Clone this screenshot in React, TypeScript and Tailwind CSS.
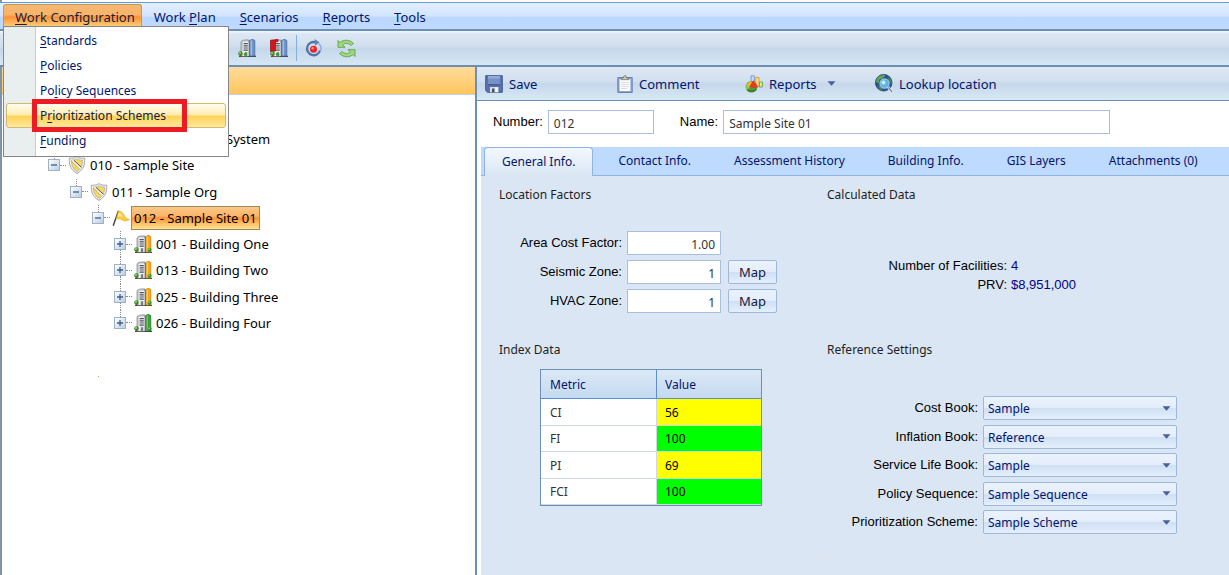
import React from "react";

const UI = "font-['Noto_Sans','Open_Sans',sans-serif]";
const LABEL = "font-['Liberation_Sans',Arial,sans-serif] text-[13px] text-black";

function Mnemonic({ text, at }: { text: string; at: number }) {
  return (
    <span>
      {text.slice(0, at)}
      <span className="underline underline-offset-2">{text[at]}</span>
      {text.slice(at + 1)}
    </span>
  );
}

/* ---------- icons ---------- */

function FacilityIcon({ tower, red = false }: { tower: "orange" | "green" | "blue"; red?: boolean }) {
  const fill = { orange: "#f5a81c", green: "#3f9e3f", blue: "#6f94c8" }[tower];
  const edge = { orange: "#c97b0a", green: "#23702a", blue: "#3d629b" }[tower];
  const light = { orange: "#ffd873", green: "#85cc7c", blue: "#b4cbea" }[tower];
  return (
    <svg width="18" height="18" viewBox="0 0 18 18" aria-hidden="true" className="shrink-0">
      <path d="M1 17.4h17" stroke="#45484c" strokeWidth="1.2" />
      <path d="M12 1.2l2.600-.9 2.200 1.200V17H12z" fill={fill} stroke={edge} strokeWidth=".7" />
      <path d="M13.200 1.600v15" stroke={light} strokeWidth="1.200" />
      <path d="M3 2.800l2-1.600 5.500-.4V17H3z" fill="#c3c6ca" stroke="#8d9197" strokeWidth=".8" />
      <path d="M4.800 2.600h6.200V17H4.800z" fill="#eff0f2" />
      <path d="M11.300 1.500V17" stroke="#6b6f76" strokeWidth="1.300" />
      <path d="M5.600 4.600h4.200M5.600 6.800h4.200M5.600 9h4.200M5.600 11.200h4.200" stroke="#4d5157" strokeWidth="1.200" />
      <path d="M6.800 13.200h2.400V17H6.800z" fill="#777c83" />
      {red && <path d="M.5 1.200l7.500-.8v2l-2.500.6v9L.5 12.500z" fill="#d2161c" stroke="#930c10" strokeWidth=".7" />}
      <circle cx="2.400" cy="14.500" r="2.200" fill="#359226" />
      <circle cx="2" cy="13.900" r="1" fill="#8dd666" />
      <path d="M2.400 15.800v1.600" stroke="#6b4a22" strokeWidth="1" />
      {tower === "blue" ? (
        <circle cx="7.500" cy="15.200" r="1.800" fill="#41a02d" />
      ) : (
        <>
          <circle cx="15.500" cy="14.800" r="2.100" fill="#359226" />
          <circle cx="15.100" cy="14.200" r=".9" fill="#8dd666" />
        </>
      )}
    </svg>
  );
}

function ShieldIcon() {
  return (
    <svg width="18" height="18" viewBox="0 0 18 18" aria-hidden="true" className="shrink-0">
      <path d="M9 .6c2 1.400 4.700 1.900 7.700 1.500.5 6.700-1.500 12-7.700 15.300C2.800 14.100.8 8.800 1.300 2.100 4.300 2.500 7 2 9 .6z" fill="#ececec" stroke="#a3a3a3" strokeWidth=".9" />
      <path d="M9 2.900c1.600 1 3.500 1.400 5.500 1.300.1 4.800-1.400 8.600-5.500 11.200C4.900 12.800 3.400 9 3.500 4.200 5.500 4.300 7.400 3.900 9 2.900z" fill="#fbd75a" stroke="#a9a9a9" strokeWidth=".7" />
      <path d="M3.600 4.300h2.200l7.500 7-1.500 2z" fill="#fdfdfd" />
      <path d="M5.800 4.200l7.600 7.200" stroke="#4f4a3c" strokeWidth="1" />
      <path d="M3.800 5.300l8 8" stroke="#8d8a80" strokeWidth=".6" />
    </svg>
  );
}

function FlagIcon() {
  return (
    <svg width="18" height="18" viewBox="0 0 18 18" aria-hidden="true" className="shrink-0">
      <path d="M6.500 1.800L1.200 16.800" stroke="#4a4a4a" strokeWidth="1.500" />
      <path d="M6.500 2.200c2.200-.8 3.800 1.400 5.400 3.800 1.400 2.200 3 4 5.600 4.600-2.800 1.900-5.200 1.600-7.200.4-2-1.100-3.700-1.600-6.100-.9z" fill="#fccb3c" stroke="#eaa70e" strokeWidth=".6" />
      <path d="M7 3.500c1.800.2 2.700 2.600 4.200 5-1.800-1-3.600-1.200-5.400-.8z" fill="#ffe896" />
    </svg>
  );
}

function RecordIcon() {
  return (
    <svg width="18" height="18" viewBox="0 0 18 18" aria-hidden="true">
      <path d="M10.500 3.300A6.600 6.600 0 1 0 15 11.500" fill="none" stroke="#5274ad" strokeWidth="2.300" />
      <path d="M9.500 0l5 3.200-4.500 3.600z" fill="#5f82ba" />
      <path d="M13.500 4.500c2.200 1.600 3 4 2.400 6.500" fill="none" stroke="#91a9cf" strokeWidth="1.500" />
      <circle cx="8.500" cy="10.200" r="3.500" fill="#e5262c" />
      <circle cx="7.700" cy="9.200" r="1.200" fill="#ff9490" />
    </svg>
  );
}

function RefreshIcon() {
  return (
    <svg width="19" height="19" viewBox="0 0 19 19" aria-hidden="true">
      <path d="M1 1.500l1.900 2C6.500.5 12.500.2 16.500 4.500l-2.600 2C11.500 3.800 8 3.800 5.600 6L8 8.300H1z" fill="#a4d67f" stroke="#5aa544" strokeWidth=".9" />
      <path d="M18 17.500l-1.900-2c-3.600 3-9.600 3.300-13.600-1l2.600-2c2.400 2.700 5.900 2.700 8.300.5L11 10.700h7z" fill="#a4d67f" stroke="#5aa544" strokeWidth=".9" />
    </svg>
  );
}

function SaveIcon() {
  return (
    <svg width="18" height="18" viewBox="0 0 18 18" aria-hidden="true">
      <path d="M.7.7h16.600v16.600H2.500L.7 15.500z" fill="#5673b0" stroke="#3f5b96" />
      <path d="M3 1h12v8.500H3z" fill="#7591c5" />
      <path d="M3 1h12v2.500H3z" fill="#93acd6" />
      <path d="M3 9.800h12" stroke="#35508c" />
      <path d="M5 12h8.500v5.300H5z" fill="#d9dce2" />
      <path d="M7 13.500h2.500v3.800H7z" fill="#48506a" />
      <path d="M10.500 12.500h2v4.500h-2z" fill="#fff" />
    </svg>
  );
}

function ClipboardIcon() {
  return (
    <svg width="16" height="18" viewBox="0 0 16 18" aria-hidden="true">
      <path d="M.8 2.500h14.400v15H.8z" fill="#8ba6d2" stroke="#6384bb" />
      <path d="M2.600 4h10.800v12H2.600z" fill="#fff" />
      <path d="M4 7.500h8M4 9.500h8M4 11.500h8M4 13.500h6" stroke="#ccd2dc" strokeWidth=".8" />
      <path d="M4 4.700V3h2.300C6.500 1.300 7 .6 8 .6s1.500.7 1.700 2.400H12v1.700z" fill="#c7c4bd" stroke="#77736a" strokeWidth=".8" />
    </svg>
  );
}

function ReportsIcon() {
  return (
    <svg width="18" height="18" viewBox="0 0 18 18" aria-hidden="true">
      <path d="M6 .8h3.400V9H6z" fill="#c8daf1" stroke="#6b90c5" strokeWidth=".8" />
      <path d="M10.800 2.500h3.200V11h-3.200z" fill="#ffe08a" stroke="#dc9418" strokeWidth=".8" />
      <path d="M14.400 7h3v5h-3z" fill="#d3ecae" stroke="#5a9b2d" strokeWidth=".8" />
      <circle cx="6.500" cy="11.800" r="5.800" fill="#4e9a36" />
      <path d="M6.500 11.500L1 9.600A5.900 5.900 0 0 0 1.600 15z" fill="#84c65e" />
      <path d="M4 12L8.300 5.200l5 7c-3 .9-6.300.9-9.300-.2z" fill="#e33b24" />
      <path d="M1.500 9.500L5.500 6l1.500 1.200L4 12z" fill="#f7b32c" />
      <path d="M2 15c2.500 1.600 6.500 1.500 9.500-.3" stroke="#2f6f24" fill="none" />
    </svg>
  );
}

function GlobeIcon() {
  return (
    <svg width="18" height="19" viewBox="0 0 18 19" aria-hidden="true">
      <circle cx="8.700" cy="8.700" r="8.300" fill="#2c529c" stroke="#27406f" strokeWidth=".8" />
      <path d="M2 4.500C4 1.500 7 .8 10.500 1.200L8 4 4.500 5.500 3.800 9 1 8.300z" fill="#5ba952" />
      <path d="M3 11l3.500 1.500 1 4.200C5 16.200 3.200 14 3 11zM13 2.500l3 3 .8 4-3-1z" fill="#3f8e48" />
      <circle cx="9.500" cy="9.500" r="4.600" fill="#56b7e8" stroke="#a9c6de" strokeWidth="1.100" />
      <circle cx="8.500" cy="8.500" r="2" fill="#c9f0ff" />
      <path d="M13 13l4 4.800" stroke="#eef2f6" strokeWidth="2.600" />
      <path d="M13.300 13.300l3.700 4.500" stroke="#5e789f" strokeWidth="1.200" />
    </svg>
  );
}

function Caret({ className = "" }: { className?: string }) {
  return (
    <svg width="9" height="5" viewBox="0 0 9 5" aria-hidden="true" className={className}>
      <path d="M.5.3h8L4.500 4.800z" fill="#4b5e9c" />
    </svg>
  );
}

/* ---------- menu ---------- */

const menuItems = [
  { text: "Standards", at: 0 },
  { text: "Policies", at: 0 },
  { text: "Policy Sequences", at: 2 },
  { text: "Prioritization Schemes", at: 1 },
  { text: "Funding", at: 0 },
];

function DropMenu() {
  return (
    <ul className="absolute left-[3px] top-[23px] z-10 w-[226px] border border-[#868686] bg-[linear-gradient(to_right,#e9eeee_31px,#c5cccc_31px,#c5cccc_32px,#ffffff_32px)] pb-[3px] pt-px text-[12px]">
      {menuItems.map((m) => (
        <li key={m.text} className="relative px-[2px]">
          <button
            type="button"
            className={
              m.text === "Prioritization Schemes"
                ? "flex h-[25px] w-full items-center rounded-[3px] border border-[#d2b970] bg-[linear-gradient(#fffdee,#ffedb0_48%,#ffd254_52%,#ffe9a0)] pl-[33px] text-left text-[#15203f]"
                : "flex h-[25px] w-full items-center border border-transparent pl-[33px] text-left text-[#00156e]"
            }
          >
            <Mnemonic text={m.text} at={m.at} />
          </button>
          {m.text === "Prioritization Schemes" && (
            <span className="pointer-events-none absolute -top-[4px] left-[28px] h-[33px] w-[155px] border-[5px] border-[#ed1c24]" />
          )}
        </li>
      ))}
    </ul>
  );
}

function MenuBar() {
  const rest = ["Work Plan", "Scenarios", "Reports", "Tools"];
  return (
    <nav className="relative flex h-[26px] items-stretch bg-[linear-gradient(#e3efff,#d2e4ff_50%,#bcd8ff_55%,#bfd9ff)] pl-[3px] text-[#00156e]">
      <button type="button" className="mt-px rounded-t-[3px] border border-b-0 border-[#c49b50] bg-[linear-gradient(#f3b877,#f9b467_40%,#fb9137_50%,#fdc066_80%,#ffdd8e)] pl-[11px] pr-[6px] text-[#15203f]">
        <Mnemonic text="Work Configuration" at={0} />
      </button>
      {rest.map((t) => (
        <button key={t} type="button" className="mt-px px-[12px]">
          <Mnemonic text={t} at={t === "Work Plan" ? 5 : 0} />
        </button>
      ))}
      <DropMenu />
    </nav>
  );
}

function ToolBar() {
  return (
    <div className="flex h-[38px] items-center gap-[14px] border-y-2 border-[#6b8fb5] bg-[linear-gradient(#f4f8fc,#dce7f3_8%,#d0deee_45%,#c5d7ea_52%,#d6e6f4)] pl-[238px]">
      <button type="button" aria-label="Facilities"><FacilityIcon tower="blue" /></button>
      <button type="button" aria-label="Close facilities"><FacilityIcon tower="blue" red /></button>
      <span className="-mx-[6px] h-[26px] w-px bg-[#7fb0e8]" />
      <button type="button" aria-label="Recalculate"><RecordIcon /></button>
      <button type="button" aria-label="Refresh"><RefreshIcon /></button>
    </div>
  );
}

/* ---------- tree ---------- */

type Kind = "shield" | "flag" | "orange" | "green";
const nodes: { text: string; pad: string; kind: Kind; open: boolean; last: boolean }[] = [
  { text: "010 - Sample Site", pad: "pl-[46px]", kind: "shield", open: true, last: true },
  { text: "011 - Sample Org", pad: "pl-[68px]", kind: "shield", open: true, last: true },
  { text: "012 - Sample Site 01", pad: "pl-[90px]", kind: "flag", open: true, last: true },
  { text: "001 - Building One", pad: "pl-[112px]", kind: "orange", open: false, last: false },
  { text: "013 - Building Two", pad: "pl-[112px]", kind: "orange", open: false, last: false },
  { text: "025 - Building Three", pad: "pl-[112px]", kind: "orange", open: false, last: false },
  { text: "026 - Building Four", pad: "pl-[112px]", kind: "green", open: false, last: true },
];

function NodeIcon({ kind }: { kind: Kind }) {
  if (kind === "shield") return <ShieldIcon />;
  if (kind === "flag") return <FlagIcon />;
  return <FacilityIcon tower={kind} />;
}

function Tree() {
  return (
    <aside className="w-[473px] shrink-0 bg-white">
      <div className="h-[28px] border-b border-[#b9d2ee] bg-[linear-gradient(#ffdb9c,#ffc65c)]" />
      <ul className="mt-[31px] grid h-[210px] grid-rows-8 text-black">
        <li className="flex items-center pl-[224px]">System</li>
        {nodes.map((n) => (
          <li key={n.text} className={`flex items-center ${n.pad}`}>
            <span className="flex h-full w-3 flex-col items-center">
              <span className="flex-1 border-l border-dotted border-[#8a8a8a]" />
              <button type="button" aria-label={n.open ? "Collapse" : "Expand"} className="flex h-3 w-3 items-center justify-center border border-[#9db1c8] bg-[linear-gradient(135deg,#ffffff,#b9cde2)]">
                <svg width="6" height="6" viewBox="0 0 6 6" aria-hidden="true">
                  <path d={n.open ? "M0 3h6" : "M0 3h6M3 0v6"} stroke="#3f5f86" strokeWidth="1.300" />
                </svg>
              </button>
              <span className={n.last ? "flex-1" : "flex-1 border-l border-dotted border-[#8a8a8a]"} />
            </span>
            <span className="mr-[2px] w-[6px] border-t border-dotted border-[#8a8a8a]" />
            <NodeIcon kind={n.kind} />
            <span
              className={
                n.kind === "flag"
                  ? "ml-px flex h-[24px] items-center border border-[#9c8a5c] bg-[linear-gradient(#fbc887,#fbb468_42%,#fb9138_50%,#fdb75c_70%,#ffe391)] px-[2px]"
                  : "ml-[4px]"
              }
            >
              {n.text}
            </span>
          </li>
        ))}
      </ul>
      <span className="ml-[96px] mt-[40px] block h-px w-px bg-[#e79a2c]" />
    </aside>
  );
}

/* ---------- detail panel ---------- */

function ActionBar() {
  const item = "flex items-center gap-[6px]";
  return (
    <div className="flex h-[34px] items-center border-b border-[#6b8fb5] bg-[linear-gradient(#dfe9f4,#d0deee_45%,#c5d7ea_52%,#d8e9f5)] pl-[8px] text-[#00156e]">
      <button type="button" className={`${item} w-[132px]`}><SaveIcon />Save</button>
      <button type="button" className={`${item} w-[128px]`}><ClipboardIcon />Comment</button>
      <button type="button" className={`${item} w-[130px]`}><ReportsIcon />Reports<Caret className="ml-[4px]" /></button>
      <button type="button" className={item}><GlobeIcon />Lookup location</button>
    </div>
  );
}

const field = "h-[24px] border border-[#a9bfdf] bg-white pt-[2px] text-[12px] text-[#333333] outline-none";

function Identity() {
  return (
    <div className="flex items-center bg-white pb-[13px] pl-[16px] pt-[9px]">
      <label htmlFor="number" className={LABEL}>Number:</label>
      <input id="number" defaultValue="012" className={`${field} ml-[5px] w-[106px] px-[5px]`} />
      <label htmlFor="name" className={`${LABEL} ml-[26px]`}>Name:</label>
      <input id="name" defaultValue="Sample Site 01" className={`${field} ml-[5px] w-[387px] px-[5px]`} />
    </div>
  );
}

function Tabs() {
  const tabs = ["General Info.", "Contact Info.", "Assessment History", "Building Info.", "GIS Layers", "Attachments (0)"];
  return (
    <div role="tablist" className="flex h-[29px] gap-[7px] border-b border-[#8fb4e3] bg-[#bfdaff] pl-[3px] text-[12px] text-[#00156e]">
      {tabs.map((t, i) => (
        <button
          key={t}
          type="button"
          role="tab"
          aria-selected={i === 0}
          className={
            i === 0
              ? "-mb-px whitespace-nowrap rounded-t-[4px] border border-b-0 border-[#8fb4e3] bg-[linear-gradient(#f3f8fe,#dae6f4)] px-[17px]"
              : "whitespace-nowrap px-[18px]"
          }
        >
          {t}
        </button>
      ))}
    </div>
  );
}

function Group({ title, children, className = "" }: { title: string; children: React.ReactNode; className?: string }) {
  return (
    <fieldset className={`min-w-0 border border-[#dfe5ee] pl-[4px] ${className}`}>
      <legend className="px-[2px] text-[12px] leading-[18px] text-[#1e1e1e]">{title}</legend>
      {children}
    </fieldset>
  );
}

function Factor({ id, label, value, map }: { id: string; label: string; value: string; map: boolean }) {
  return (
    <div className="flex items-center">
      <label htmlFor={id} className={`${LABEL} w-[125px] text-right`}>{label}</label>
      <input id={id} defaultValue={value} className={`${field} ml-[5px] w-[94px] px-[5px] text-right`} />
      {map && (
        <button type="button" className="ml-[7px] h-[24px] w-[49px] rounded-[2px] border border-[#9fb8da] bg-[linear-gradient(#eaf2fc,#e4eefb_48%,#d0e0f4_52%,#e4effc)] text-[#15203f]">
          Map
        </button>
      )}
    </div>
  );
}

const metrics = [
  { name: "CI", value: "56", color: "bg-[#ffff00]" },
  { name: "FI", value: "100", color: "bg-[#00ff00]" },
  { name: "PI", value: "69", color: "bg-[#ffff00]" },
  { name: "FCI", value: "100", color: "bg-[#00ff00]" },
];

function MetricTable() {
  return (
    <table className="ml-[43px] mt-[10px] h-[137px] w-[222px] border-separate border-spacing-0 border border-[#6b8fb5] bg-white text-left text-[12px] text-[#333333]">
      <thead>
        <tr className="h-[29px] bg-[linear-gradient(#dce9f5,#c3d8f0)] text-[#00156e]">
          <th className="w-[116px] border-b border-r border-[#5b8fd0] pl-[9px] pt-[2px] font-normal">Metric</th>
          <th className="border-b border-[#5b8fd0] pl-[8px] pt-[2px] font-normal">Value</th>
        </tr>
      </thead>
      <tbody>
        {metrics.map((m) => (
          <tr key={m.name} className="h-[26px]">
            <td className="border-b border-r border-[#d0d7e5] pl-[9px] pt-[2px]">{m.name}</td>
            <td className={`border-b border-[#d0d7e5] pl-[8px] pt-[2px] text-black ${m.color}`}>{m.value}</td>
          </tr>
        ))}
      </tbody>
    </table>
  );
}

const settings = [
  { id: "cost", label: "Cost Book:", value: "Sample" },
  { id: "inflation", label: "Inflation Book:", value: "Reference" },
  { id: "life", label: "Service Life Book:", value: "Sample" },
  { id: "policy", label: "Policy Sequence:", value: "Sample Sequence" },
  { id: "scheme", label: "Prioritization Scheme:", value: "Sample Scheme" },
];

function Settings() {
  return (
    <div className="mt-[37px] flex h-[138px] flex-col justify-between">
      {settings.map((s) => (
        <div key={s.id} className="flex items-center">
          <label htmlFor={s.id} className={`${LABEL} w-[153px] whitespace-nowrap text-right`}>{s.label}</label>
          <span className="relative ml-[5px] flex items-center">
            <select id={s.id} className="h-[24px] w-[194px] appearance-none rounded-[2px] border border-[#9fb8da] bg-[linear-gradient(#eaf2fc,#e4eefb_48%,#d0e0f4_52%,#e4effc)] pl-[4px] pt-[2px] text-[12px] text-[#00156e] outline-none">
              <option>{s.value}</option>
            </select>
            <Caret className="pointer-events-none absolute right-[6px]" />
          </span>
        </div>
      ))}
    </div>
  );
}

export default function App() {
  return (
    <div className={`${UI} flex min-h-screen flex-col border-l-2 border-[#7f93ab] bg-white text-[13px] leading-[18px]`}>
      <div className="-ml-[2px] mt-[2px] border-t border-[#6b9bd0]">
        <MenuBar />
        <ToolBar />
      </div>
      <div className="flex flex-1">
        <Tree />
        <main className="flex min-w-0 flex-1 flex-col border-l-2 border-[#6b8fb5] bg-white">
          <ActionBar />
          <Identity />
          <div className="ml-[4px] flex flex-1 flex-col bg-[#dae6f4]">
            <Tabs />
            <div className="grid grid-cols-[316px_376px] content-start gap-x-[12px] gap-y-[8px] pl-[11px] pt-[10px]">
              <Group title="Location Factors" className="h-[147px]">
                <div className="mt-[27px] flex flex-col gap-[5px]">
                  <Factor id="acf" label="Area Cost Factor:" value="1.00" map={false} />
                  <Factor id="seismic" label="Seismic Zone:" value="1" map />
                  <Factor id="hvac" label="HVAC Zone:" value="1" map />
                </div>
              </Group>
              <Group title="Calculated Data" className="h-[147px]">
                <dl className={`${LABEL} mt-[52px] grid grid-cols-[182px_auto] gap-x-[4px] leading-[19px]`}>
                  <dt className="text-right">Number of Facilities:</dt>
                  <dd className="text-[#00008b]">4</dd>
                  <dt className="text-right">PRV:</dt>
                  <dd className="text-[#00008b]">$8,951,000</dd>
                </dl>
              </Group>
              <Group title="Index Data" className="h-[218px]">
                <MetricTable />
              </Group>
              <Group title="Reference Settings" className="h-[218px]">
                <Settings />
              </Group>
            </div>
          </div>
        </main>
      </div>
    </div>
  );
}
